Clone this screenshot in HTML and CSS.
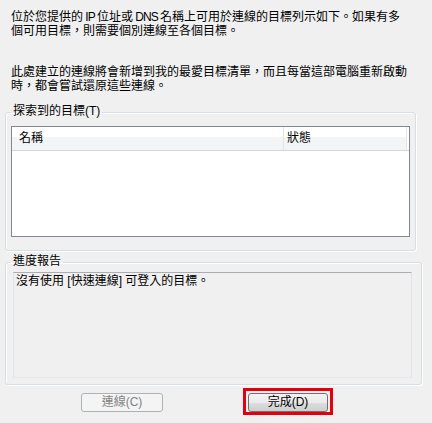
FILE: index.html
```html
<!DOCTYPE html>
<html lang="zh-Hant">
<head>
<meta charset="utf-8">
<link rel="stylesheet" href="styles.css">
</head>
<body>
<div class="dialog">
  <p class="intro">位於您提供的 <span class="latin">IP</span> 位址或 <span class="latin">DNS</span> 名稱上可用於連線的目標列示如下。如果有多<br>個可用目標，則需要個別連線至各個目標。</p>
  <p class="intro second">此處建立的連線將會新增到我的最愛目標清單，而且每當這部電腦重新啟動<br>時，都會嘗試還原這些連線。</p>

  <fieldset class="group group-targets">
    <legend class="group-label">探索到的目標(T)</legend>
    <div class="listview">
      <div class="lv-header">
        <div class="lv-col lv-name">名稱</div>
        <div class="lv-col lv-status">狀態</div>
        <div class="lv-fill"></div>
      </div>
      <div class="lv-body"></div>
    </div>
  </fieldset>

  <fieldset class="group group-progress">
    <legend class="group-label">進度報告</legend>
    <div class="report">沒有使用 [快速連線] 可登入的目標。</div>
  </fieldset>

  <div class="buttons">
    <button class="btn btn-disabled" disabled>連線(C)</button>
    <span class="highlight"><button class="btn">完成(D)</button></span>
  </div>
</div>
</body>
</html>
```

FILE: styles.css
```css
html, body {
  margin: 0;
  padding: 0;
  background: #f0f0f0;
}

body {
  width: 432px;
  height: 423px;
  overflow: hidden;
  font-family: "Liberation Sans", "Noto Sans CJK TC", sans-serif;
  font-size: 12px;
  color: #000;
}

.dialog {
  padding-top: 10px;
}

.intro {
  margin: 0 0 0 11px;
  line-height: 14px;
  white-space: nowrap;
  word-spacing: -1px;
}

.latin {
  letter-spacing: -1px;
}

.intro.second {
  margin-top: 27px;
}

.group {
  margin: 0 0 0 5px;
  width: 399px;
  border: 1px solid #d5dfe5;
  border-radius: 3px;
  box-shadow: inset 1px 1px 0 #fff, 1px 1px 0 #fff;
  padding: 0 5px 13px 5px;
}

.group-targets {
  margin-top: 11px;
}

.group-label {
  padding: 0 2px 3px 2px;
  line-height: 14px;
  margin-left: 0;
}

.listview {
  margin-top: 5px;
  height: 109px;
  border: 1px solid #828790;
  background: #fff;
  display: flex;
  flex-direction: column;
}

.lv-header {
  display: flex;
  height: 23px;
  border-bottom: 1px solid #d5d5d5;
  background: linear-gradient(#ffffff 0%, #ffffff 42%, #f3f4f6 43%, #f3f4f6 100%);
}

.lv-col {
  line-height: 23px;
  padding-left: 7px;
  box-sizing: border-box;
}

.lv-name {
  width: 272px;
  border-right: 1px solid #e3e5e7;
}

.lv-status {
  padding-left: 3px;
  width: 123px;
  border-right: 1px solid #e3e5e7;
}

.lv-fill {
  flex: 1;
  background: #fff;
}

.lv-body {
  flex: 1;
}

.group-progress {
  margin-top: 3px;
  padding: 0 9px 6px 7px;
}

.group-progress .group-label {
  margin-left: -2px;
}

.report {
  margin-top: 1px;
  height: 103px;
  border: 1px solid #e2e3ea;
  border-top-color: #abadb3;
  border-bottom-color: #e3e9ef;
  padding: 1px 2px 0 2px;
  line-height: 14px;
}

.buttons {
  display: flex;
  align-items: flex-start;
  margin-top: 3px;
  padding-left: 81px;
  gap: 80px;
}

.btn {
  font-family: "Liberation Sans", "Noto Sans CJK TC", sans-serif;
  font-size: 12px;
  height: 19px;
  padding: 0;
  border: 1px solid #707070;
  border-radius: 3px;
  background: linear-gradient(#f2f2f2 0%, #ebebeb 50%, #dddddd 51%, #cfcfcf 100%);
  color: #000;
  width: 80px;
  line-height: 17px;
}

.btn-disabled {
  margin-top: 5px;
  width: 82px;
  border-color: #adb2b5;
  background: #f4f4f4;
  color: #838383;
}

.highlight {
  display: inline-flex;
  border: 3px solid #e4000f;
  padding: 2px 2px 0 2px;
}
```
